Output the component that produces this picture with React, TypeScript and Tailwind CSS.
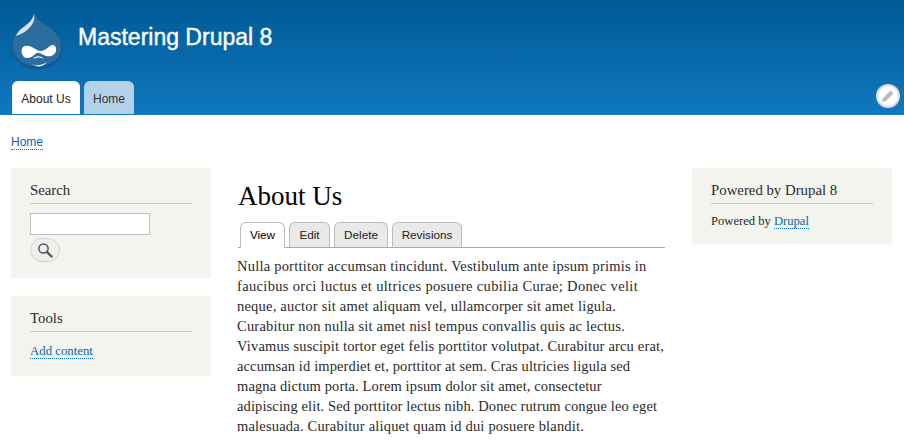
const serif = { fontFamily: '"Liberation Serif", serif' }
const sans = { fontFamily: '"Liberation Sans", sans-serif' }

const bodyLines = [
  { text: 'Nulla porttitor accumsan tincidunt. Vestibulum ante ipsum primis in', cls: 'tracking-[0.22px]' },
  { text: 'faucibus orci luctus et ultrices posuere cubilia Curae; Donec velit', cls: 'tracking-[0.33px]' },
  { text: 'neque, auctor sit amet aliquam vel, ullamcorper sit amet ligula.', cls: 'tracking-[0.21px]' },
  { text: 'Curabitur non nulla sit amet nisl tempus convallis quis ac lectus.', cls: 'tracking-[0.21px]' },
  { text: 'Vivamus suscipit tortor eget felis porttitor volutpat. Curabitur arcu erat,', cls: 'tracking-[0.17px]' },
  { text: 'accumsan id imperdiet et, porttitor at sem. Cras ultricies ligula sed', cls: 'tracking-[0.12px]' },
  { text: 'magna dictum porta. Lorem ipsum dolor sit amet, consectetur', cls: 'tracking-[0.12px]' },
  { text: 'adipiscing elit. Sed porttitor lectus nibh. Donec rutrum congue leo eget', cls: 'tracking-[0.12px]' },
  { text: 'malesuada. Curabitur aliquet quam id dui posuere blandit.', cls: 'tracking-[0.19px]' },
]

function DrupalLogo() {
  return (
    <svg width="52" height="60" viewBox="0 0 52 60" className="block">
      <path d="M23 1 C24 8 31 11 37 15 C46 21 51 29 51 36 C51 49 40 58 26 58 C12 58 1 49 1 36 C1 26 6 19 13 15 C18 12 22 8 23 1Z" fill="#2b6d9f" stroke="#155a8d" strokeWidth="1" />
      <path d="M2 38 C3 50 13 58 26 58 C39 58 50 50 51 38 C48 50 38 55 26 55 C14 55 5 49 2 38Z" fill="#0f5a91" />
      <path d="M23 3 C21 11 15 14 10 18 C8 20 6 22 5 25 C11 23 16 20 20 15 C23 11 24 7 23 3Z" fill="#d5e3ee" />
      <path d="M12 36 C16 33 21 36 26 39 C31 42 35 38 39 35 C43 32 46 36 45 40 C44 44 40 46 35 45 C31 44 29 41 26 42 C23 43 22 47 16 47 C11 47 9 39 12 36Z" fill="#fff" />
      <path d="M22 48 C24 45 29 44 33 48 C29 46 26 46 22 48Z" fill="#fff" />
      <path d="M21 53 C25 55 30 55 36 51 C32 56 26 57 21 53Z" fill="#fff" />
    </svg>
  )
}

function SearchIcon() {
  return (
    <svg width="16" height="16" viewBox="0 0 16 16" fill="none" className="block">
      <circle cx="6.5" cy="6.5" r="4.6" stroke="#555" strokeWidth="1.5" />
      <path d="M10 10 L14.5 14.5" stroke="#555" strokeWidth="2.4" strokeLinecap="round" />
    </svg>
  )
}

function PencilIcon() {
  return (
    <svg width="14" height="14" viewBox="0 0 14 14" className="block">
      <path d="M1 13 L2 9 L9.5 1.5 L12.5 4.5 L5 12 Z" fill="#bbb" />
    </svg>
  )
}

function Block({ title, className, children }: { title: string; className?: string; children: React.ReactNode }) {
  return (
    <div className={`bg-[#f4f4ef] w-[200px] px-[19px] pt-[14px] ${className ?? ''}`}>
      <h2 className="text-[14.8px] leading-[17px] text-[#2a2a2a] border-b border-[#c9c9c5] pb-[5px] h-[22px]">{title}</h2>
      {children}
    </div>
  )
}

const linkCls = 'text-[#0a65ad] border-b border-dotted border-[#0071b3]'

export default function App() {
  return (
    <div className="w-[904px] h-[447px] overflow-hidden bg-white text-[#2a2a2a]" style={serif}>
      <header className="h-[115px] bg-gradient-to-b from-[#005a96] to-[#1178bf] relative" style={sans}>
        <div className="flex h-[81px]">
          <div className="ml-[11px] mt-[11px]"><DrupalLogo /></div>
          <div className="ml-[15px] mt-[22px] text-white text-[23px] leading-[30px] [-webkit-text-stroke:0.4px_white]">Mastering Drupal 8</div>
        </div>
        <nav className="flex gap-[4px] ml-[12px] text-[12px]">
          <a className="h-[33px] w-[68px] pt-[3px] bg-white rounded-t-[6px] flex items-center justify-center text-[#222]">About Us</a>
          <a className="h-[33px] w-[50px] pt-[3px] bg-[#b3d2e9] rounded-t-[6px] flex items-center justify-center text-[#333]">Home</a>
        </nav>
        <div className="absolute left-[876px] top-[84px] w-[24px] h-[24px] rounded-full bg-white border-2 border-[#ddd] flex items-center justify-center">
          <PencilIcon />
        </div>
      </header>

      <div className="ml-[11px] mt-[20px] h-[33px] text-[12px] leading-[15px]" style={sans}>
        <a className={linkCls}>Home</a>
      </div>

      <div className="flex ml-[11px]">
        <aside className="w-[227px] shrink-0">
          <Block title="Search" className="h-[110px]">
            <input className="block mt-[9px] w-[120px] h-[22px] bg-white border border-[#c0c0c0]" />
            <button className="mt-[3px] w-[30px] h-[24px] rounded-[12px] bg-[#eeeeec] border border-[#d2d2d2] flex items-center justify-center">
              <SearchIcon />
            </button>
          </Block>
          <Block title="Tools" className="h-[80px] mt-[18px]">
            <div className="mt-[11px] text-[12.8px] leading-[16px]"><a className={linkCls}>Add content</a></div>
          </Block>
        </aside>

        <main className="w-[427px] shrink-0">
          <h1 className="text-[27px] leading-[32px] text-black mt-[12px]">About Us</h1>
          <div className="flex gap-[4px] mt-[10px] pl-[2px] h-[26px] border-b border-[#aaa] text-[11.7px]" style={sans}>
            <a className="w-[45px] h-[26px] pb-[1px] bg-white border border-b-0 border-[#bbb] rounded-t-[6px] flex items-center justify-center text-black">View</a>
            <a className="w-[41px] h-[25px] bg-[#e9e9e9] border border-b-0 border-[#bbb] rounded-t-[6px] flex items-center justify-center text-[#222]">Edit</a>
            <a className="w-[54px] h-[25px] bg-[#e9e9e9] border border-b-0 border-[#bbb] rounded-t-[6px] flex items-center justify-center text-[#222]">Delete</a>
            <a className="w-[70px] h-[25px] bg-[#e9e9e9] border border-b-0 border-[#bbb] rounded-t-[6px] flex items-center justify-center text-[#222]">Revisions</a>
          </div>
          <div className="mt-[8px] -ml-[1px] text-[14.5px] leading-[20px] whitespace-nowrap">
            {bodyLines.map(line => <div key={line.text} className={line.cls}>{line.text}</div>)}
          </div>
        </main>

        <aside className="ml-[27px] w-[200px] shrink-0">
          <Block title="Powered by Drupal 8" className="h-[76px]">
            <div className="mt-[9px] text-[12.6px] leading-[16px]">Powered by <a className={linkCls}>Drupal</a></div>
          </Block>
        </aside>
      </div>
    </div>
  )
}
